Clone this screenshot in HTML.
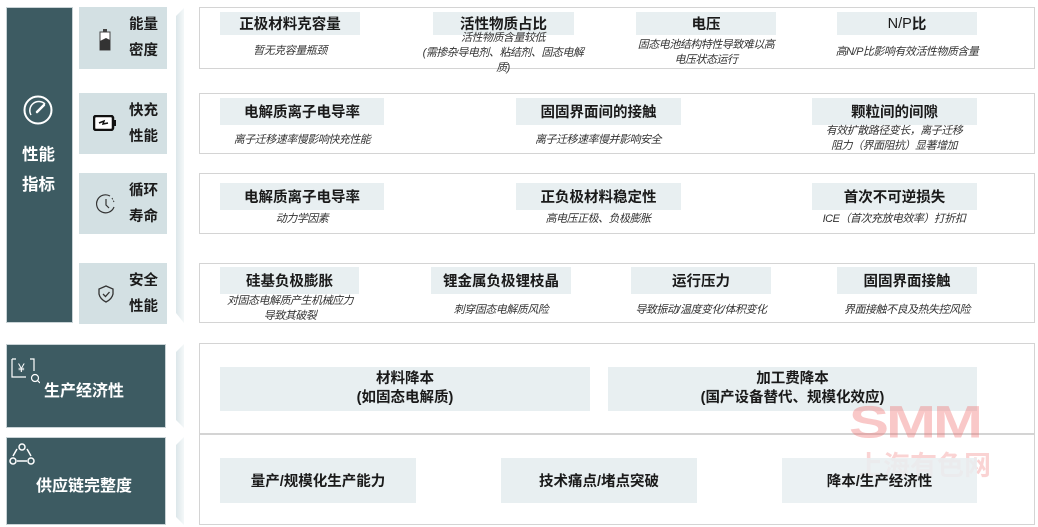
<!DOCTYPE html>
<html><head><meta charset="utf-8">
<style>
*{margin:0;padding:0;box-sizing:border-box}
body{width:1038px;height:527px;background:#fff;position:relative;overflow:hidden;font-family:"Liberation Sans","Noto Sans CJK SC",sans-serif;color:#1a1a1a}
.a{position:absolute}
.dark{background:#3d5b62;border:1px solid #c9d3d6}
.lt{background:#d3e0e3}
.box{border:1.5px solid #d4d4d4;background:#fff}
.lb{background:#e8eff1;font-weight:bold;font-size:14.5px;text-align:center;display:flex;align-items:center;justify-content:center;color:#1a1a1a}
.sub{font-size:11px;font-style:italic;color:#333;text-align:center;line-height:15px;letter-spacing:-0.5px}
.sc{font-weight:bold;font-size:14.5px;line-height:26px;color:#1a1a1a}
.wt{color:#fff;font-weight:bold;font-size:16px}
</style></head><body>
<div class="a dark" style="left:6px;top:7px;width:67px;height:316px"></div>
<svg class="a" style="left:22px;top:94px" width="32" height="32" viewBox="0 0 32 32"><circle cx="16" cy="16" r="13.5" fill="none" stroke="#fff" stroke-width="2"/><path d="M9 21 A9 9 0 0 1 23 10" fill="none" stroke="#fff" stroke-width="1.5"/><path d="M15 18 L22 11" stroke="#fff" stroke-width="2.5" stroke-linecap="round"/></svg>
<div class="a wt" style="left:22px;top:140px;line-height:30px;font-size:16.5px">性能<br>指标</div>

<div class="a lt" style="left:79px;top:7px;width:88px;height:62px"></div>
<div class="a lt" style="left:79px;top:93px;width:88px;height:61px"></div>
<div class="a lt" style="left:79px;top:173px;width:88px;height:61px"></div>
<div class="a lt" style="left:79px;top:263px;width:88px;height:61px"></div>
<div class="a sc" style="left:129px;top:12px">能量<br>密度</div>
<div class="a sc" style="left:129px;top:98px">快充<br>性能</div>
<div class="a sc" style="left:129px;top:178px">循环<br>寿命</div>
<div class="a sc" style="left:129px;top:268px">安全<br>性能</div>
<svg class="a" style="left:99px;top:29px" width="12" height="22" viewBox="0 0 12 22"><rect x="4" y="0" width="4" height="3" fill="#444"/><rect x="1" y="3" width="10" height="18" fill="#fff" stroke="#444"/><path d="M1 12 L7 9 L11 11 L11 21 L1 21Z" fill="#333"/></svg>
<svg class="a" style="left:93px;top:115px" width="24" height="16" viewBox="0 0 24 16"><rect x="1" y="1" width="19" height="14" rx="2" fill="#fff" stroke="#111" stroke-width="2.5"/><rect x="20" y="5" width="3" height="6" fill="#111"/><path d="M6 8 L11 6 L10 9 L15 8" stroke="#111" stroke-width="1.5" fill="none"/></svg>
<svg class="a" style="left:95px;top:193px" width="22" height="22" viewBox="0 0 22 22"><path d="M15 3 A9 9 0 1 0 19 14" fill="none" stroke="#333" stroke-width="1.2"/><path d="M17 5 L19 9" stroke="#333" stroke-dasharray="1.5 1.5"/><path d="M11 6 L11 12 L14 15" fill="none" stroke="#333" stroke-width="1.2"/></svg>
<svg class="a" style="left:97px;top:285px" width="18" height="18" viewBox="0 0 18 18"><path d="M9 1 L16 4 L16 9 Q15 14 9 17 Q3 14 2 9 L2 4Z" fill="none" stroke="#333" stroke-width="1.3"/><path d="M6 9 L8.5 11.5 L12.5 7" fill="none" stroke="#333" stroke-width="1.3"/></svg>

<div class="a dark" style="left:6px;top:344px;width:160px;height:84px"></div>
<div class="a dark" style="left:6px;top:437px;width:160px;height:88px"></div>
<svg class="a" style="left:8px;top:353px" width="32" height="32" viewBox="0 0 32 32"><path d="M4 6 L4 24 L18 24 M4 6 L8 6 M22 6 L26 6 L26 18" fill="none" stroke="#fff" stroke-width="1.2"/><text x="10" y="19" fill="#fff" font-size="12" font-family="Liberation Sans">¥</text><circle cx="27" cy="25" r="3.5" fill="none" stroke="#fff" stroke-width="1.2"/><path d="M29.5 27.5 L32 30" stroke="#fff" stroke-width="1.2"/></svg>
<div class="a wt" style="left:44px;top:377px">生产经济性</div>
<svg class="a" style="left:8px;top:441px" width="28" height="28" viewBox="0 0 28 28"><circle cx="14" cy="6" r="3" fill="none" stroke="#fff" stroke-width="1.5"/><circle cx="5" cy="20" r="3" fill="none" stroke="#fff" stroke-width="1.5"/><circle cx="23" cy="20" r="3" fill="none" stroke="#fff" stroke-width="1.5"/><path d="M9 20 L19 20 M5 15 L9 8 M23 15 L19 8" stroke="#fff" stroke-width="1.5"/></svg>
<div class="a wt" style="left:36px;top:472px">供应链完整度</div>

<svg class="a" style="left:172px;top:0" width="16" height="527"><defs><linearGradient id="g" x1="0" x2="1"><stop offset="0" stop-color="#dde7ea"/><stop offset="1" stop-color="#f4f8f9"/></linearGradient></defs>
<polygon points="4,16 12,8 12,323 4,313" fill="url(#g)"/>
<polygon points="4,352 12,344 12,428 4,420" fill="url(#g)"/>
<polygon points="4,445 12,437 12,525 4,517" fill="url(#g)"/></svg>

<div class="a box" style="left:199px;top:7px;width:836px;height:62px"></div>
<div class="a box" style="left:199px;top:93px;width:836px;height:61px"></div>
<div class="a box" style="left:199px;top:173px;width:836px;height:61px"></div>
<div class="a box" style="left:199px;top:263px;width:836px;height:60px"></div>
<div class="a box" style="left:199px;top:343px;width:836px;height:182px"></div>
<div class="a" style="left:199px;top:433px;width:836px;height:1.5px;background:#d4d4d4"></div>

<!-- row1 -->
<div class="a lb" style="left:220px;top:12px;width:140px;height:23px">正极材料克容量</div>
<div class="a sub" style="left:200px;top:44px;width:180px">暂无克容量瓶颈</div>
<div class="a lb" style="left:433px;top:12px;width:141px;height:23px">活性物质占比</div>
<div class="a sub" style="left:403px;top:31px;width:200px;line-height:15px">活性物质含量较低<br>(需掺杂导电剂、粘结剂、固态电解<br>质)</div>
<div class="a lb" style="left:636px;top:12px;width:140px;height:23px">电压</div>
<div class="a sub" style="left:616px;top:38px;width:180px">固态电池结构特性导致难以高<br>电压状态运行</div>
<div class="a lb" style="left:837px;top:12px;width:140px;height:23px"><span style="font-weight:normal">N/P</span>比</div>
<div class="a sub" style="left:807px;top:45px;width:200px">高N/P比影响有效活性物质含量</div>
<!-- row2 -->
<div class="a lb" style="left:220px;top:98px;width:164px;height:27px">电解质离子电导率</div>
<div class="a sub" style="left:202px;top:133px;width:200px">离子迁移速率慢影响快充性能</div>
<div class="a lb" style="left:516px;top:98px;width:165px;height:27px">固固界面间的接触</div>
<div class="a sub" style="left:498px;top:133px;width:200px">离子迁移速率慢并影响安全</div>
<div class="a lb" style="left:812px;top:98px;width:165px;height:27px">颗粒间的间隙</div>
<div class="a sub" style="left:794px;top:124px;width:200px">有效扩散路径变长，离子迁移<br>阻力（界面阻抗）显著增加</div>
<!-- row3 -->
<div class="a lb" style="left:220px;top:183px;width:164px;height:27px">电解质离子电导率</div>
<div class="a sub" style="left:202px;top:212px;width:200px">动力学因素</div>
<div class="a lb" style="left:516px;top:183px;width:165px;height:27px">正负极材料稳定性</div>
<div class="a sub" style="left:498px;top:212px;width:200px">高电压正极、负极膨胀</div>
<div class="a lb" style="left:812px;top:183px;width:165px;height:27px">首次不可逆损失</div>
<div class="a sub" style="left:794px;top:212px;width:200px">ICE（首次充放电效率）打折扣</div>
<!-- row4 -->
<div class="a lb" style="left:220px;top:267px;width:139px;height:27px">硅基负极膨胀</div>
<div class="a sub" style="left:190px;top:294px;width:200px;line-height:15px">对固态电解质产生机械应力<br>导致其破裂</div>
<div class="a lb" style="left:431px;top:267px;width:140px;height:27px">锂金属负极锂枝晶</div>
<div class="a sub" style="left:401px;top:303px;width:200px">刺穿固态电解质风险</div>
<div class="a lb" style="left:631px;top:267px;width:140px;height:27px">运行压力</div>
<div class="a sub" style="left:601px;top:303px;width:200px">导致振动/温度变化/体积变化</div>
<div class="a lb" style="left:837px;top:267px;width:140px;height:27px">固固界面接触</div>
<div class="a sub" style="left:807px;top:303px;width:200px">界面接触不良及热失控风险</div>
<!-- row5 -->
<div class="a lb" style="left:220px;top:367px;width:370px;height:44px;line-height:19px">材料降本<br>(如固态电解质)</div>
<div class="a lb" style="left:608px;top:367px;width:369px;height:44px;line-height:19px">加工费降本<br>(国产设备替代、规模化效应)</div>
<!-- watermark -->
<div class="a" style="left:849px;top:400px;font-size:60px;font-weight:900;color:rgba(240,110,110,0.38);font-family:'Liberation Sans',sans-serif;letter-spacing:-3px;line-height:60px;transform:scaleY(0.75);transform-origin:top">SMM</div>
<div class="a" style="left:856px;top:451px;font-size:27px;font-weight:bold;color:rgba(240,120,120,0.33);letter-spacing:0px;line-height:30px">上海有色网</div>
<!-- row6 -->
<div class="a lb" style="left:220px;top:458px;width:196px;height:45px">量产/规模化生产能力</div>
<div class="a lb" style="left:501px;top:458px;width:196px;height:45px">技术痛点/堵点突破</div>
<div class="a lb" style="left:782px;top:458px;width:195px;height:45px;background:rgba(232,239,241,0.85)">降本/生产经济性</div>
</body></html>
